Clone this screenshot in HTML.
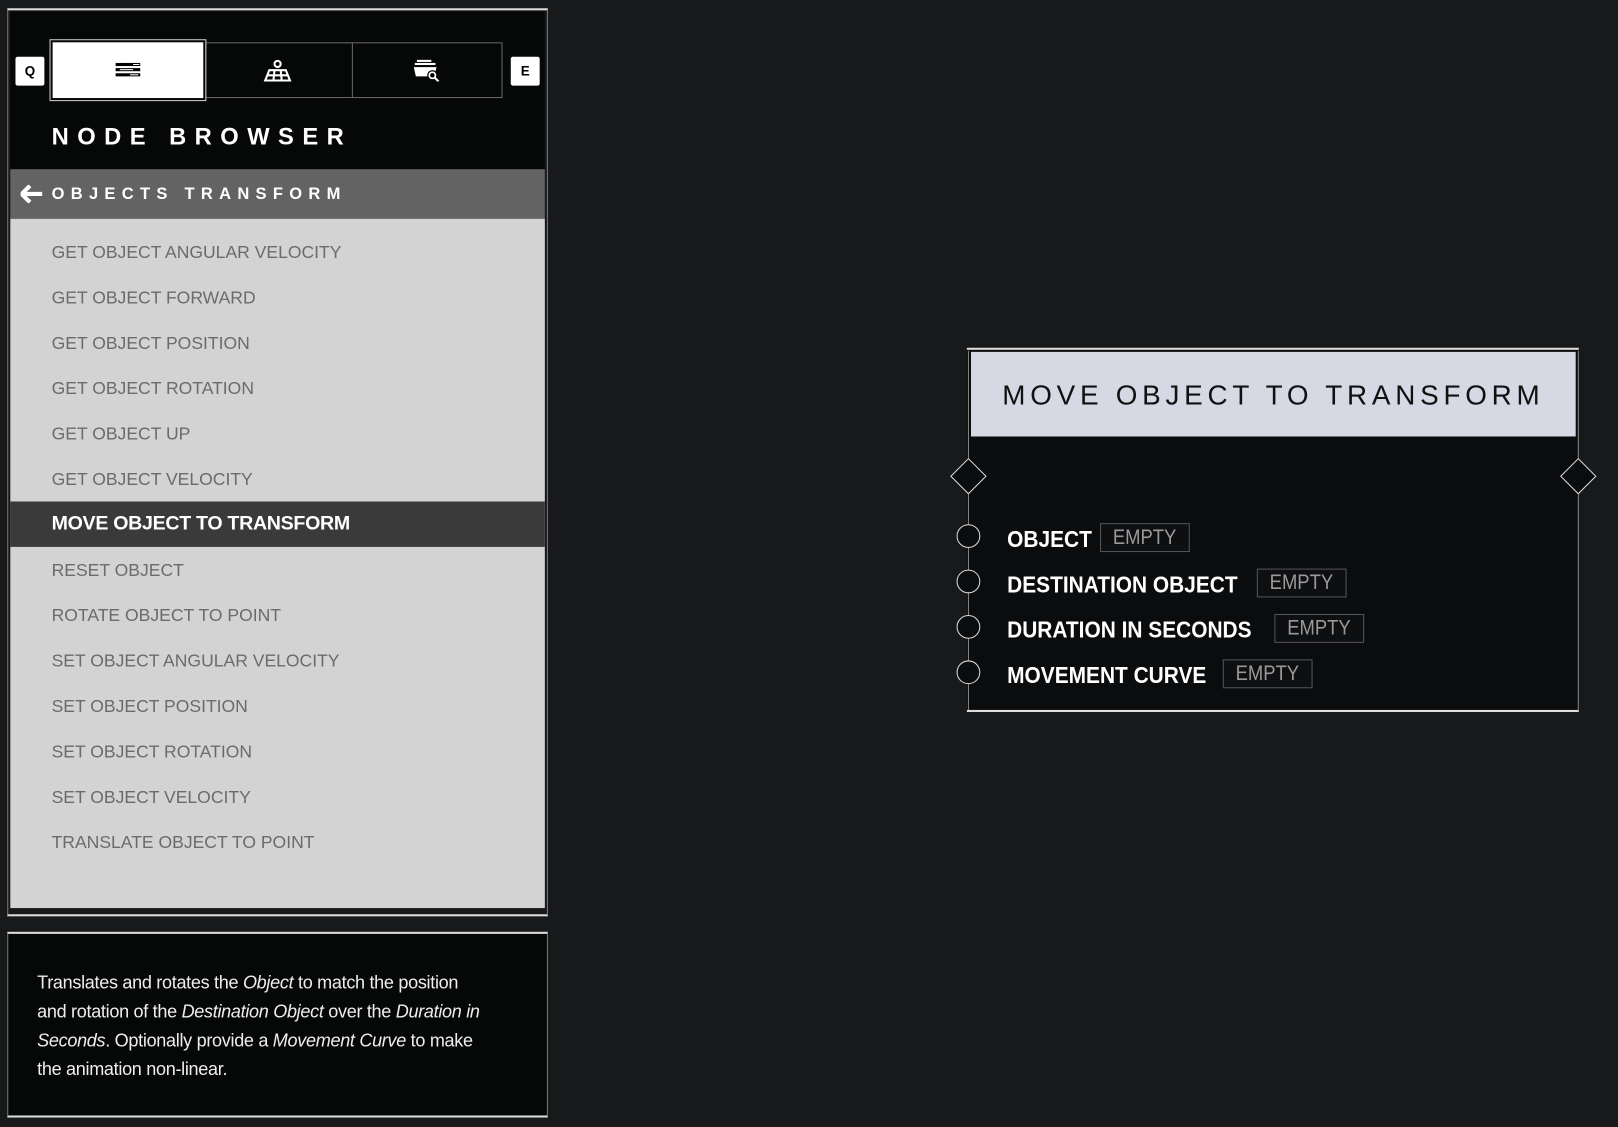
<!DOCTYPE html>
<html><head><meta charset="utf-8"><style>
*{margin:0;padding:0;box-sizing:border-box}
html,body{width:1618px;height:1127px;background:#18191b;overflow:hidden;font-family:"Liberation Sans",sans-serif}
#w{position:absolute;left:0;top:0;width:1568px;height:1092px;transform:scale(1.03189);transform-origin:0 0}
.a{position:absolute}
.item{position:absolute;left:50px;font-size:17px;color:#6b6b6b;line-height:20px}
.lbl{position:absolute;left:976px;color:#fff;font-weight:bold;font-size:22px;transform:scaleX(0.92);transform-origin:0 50%;white-space:nowrap;line-height:28px}
.emp{position:absolute;height:28px;border:1px solid #555;color:#9a9a9a;font-size:21px;line-height:26px;text-align:center;background:#0e0f11}
.emp span{display:inline-block;transform:scaleX(0.85)}
.circ{position:absolute;width:23px;height:23px;border:1.5px solid #ddd;border-radius:50%;background:#0b0c0e}
.dia{position:absolute;width:25px;height:25px;border:1.5px solid #ddd;background:#0b0c0e;transform:rotate(45deg)}
i{font-style:italic}
</style></head><body><div id="w">
<div class="a" style="left:7px;top:8px;width:524px;height:880px;border:1px solid #777;border-top:2px solid #ddd;border-bottom:2px solid #ddd"></div>
<div class="a" style="left:10px;top:11px;width:518px;height:153px;background:#060707"></div>
<div class="a" style="left:15px;top:55px;width:28px;height:28px;background:#fff;border-radius:2px;color:#000;font-weight:bold;font-size:13px;text-align:center;line-height:28px">Q</div>
<div class="a" style="left:495px;top:55px;width:28px;height:28px;background:#fff;border-radius:2px;color:#000;font-weight:bold;font-size:13px;text-align:center;line-height:28px">E</div>
<div class="a" style="left:199px;top:41px;width:288px;height:54px;border:1px solid #666"></div>
<div class="a" style="left:341px;top:41px;width:1px;height:54px;background:#666"></div>
<div class="a" style="left:48px;top:38px;width:152px;height:60px;border:1px solid #ccc"></div>
<div class="a" style="left:51px;top:41px;width:146px;height:54px;background:#fff"></div>
<svg class="a" style="left:112px;top:60px" width="24" height="16"><rect x="0" y="1" width="24" height="3" fill="#000"/><rect x="0" y="6" width="24" height="3" fill="#000"/><rect x="0" y="11" width="24" height="3" fill="#000"/><rect x="17" y="2" width="6" height="1" fill="#fff"/><rect x="4" y="7" width="13" height="1" fill="#fff"/><rect x="14" y="12" width="8" height="1" fill="#fff"/></svg>
<svg class="a" style="left:255px;top:56px" width="28" height="24" fill="none" stroke="#fff" stroke-width="2"><circle cx="14" cy="6" r="3"/><path d="M6 12h16l4 10H2z M4 17h20 M11 12l-1 10 M17 12l1 10"/></svg>
<svg class="a" style="left:400px;top:57px" width="28" height="22"><rect x="4" y="1" width="14" height="2" fill="#fff"/><rect x="2" y="4" width="20" height="2" fill="#fff"/><path d="M1 8h22l-2 9H3z" fill="#fff"/><circle cx="19" cy="16" r="5" fill="#000"/><circle cx="19" cy="16" r="3" fill="none" stroke="#fff" stroke-width="1.6"/><path d="M21 18l4 4" stroke="#fff" stroke-width="2"/></svg>
<div class="a" style="left:50px;top:119px;font-size:23px;font-weight:bold;color:#fff;letter-spacing:8.2px">NODE BROWSER</div>
<div class="a" style="left:10px;top:164px;width:518px;height:48px;background:#636363"></div>
<svg class="a" style="left:20px;top:179px" width="21" height="18"><path d="M9 1L1 9l8 8M1 9h20" stroke="#fff" stroke-width="4" fill="none"/></svg>
<div class="a" style="left:50px;top:180px;font-size:16px;font-weight:bold;color:#fff;letter-spacing:6.1px">OBJECTS TRANSFORM</div>
<div class="a" style="left:10px;top:212px;width:518px;height:668px;background:#d3d3d3"></div>
<div class="a" style="left:10px;top:486px;width:518px;height:44px;background:#3a3a3a"></div>
<div class="item" style="top:235px">GET OBJECT ANGULAR VELOCITY</div>
<div class="item" style="top:279px">GET OBJECT FORWARD</div>
<div class="item" style="top:323px">GET OBJECT POSITION</div>
<div class="item" style="top:367px">GET OBJECT ROTATION</div>
<div class="item" style="top:411px">GET OBJECT UP</div>
<div class="item" style="top:455px">GET OBJECT VELOCITY</div>
<div class="item" style="top:498px;color:#fff;font-weight:bold;font-size:19px;letter-spacing:-0.3px">MOVE OBJECT TO TRANSFORM</div>
<div class="item" style="top:543px">RESET OBJECT</div>
<div class="item" style="top:587px">ROTATE OBJECT TO POINT</div>
<div class="item" style="top:631px">SET OBJECT ANGULAR VELOCITY</div>
<div class="item" style="top:675px">SET OBJECT POSITION</div>
<div class="item" style="top:719px">SET OBJECT ROTATION</div>
<div class="item" style="top:763px">SET OBJECT VELOCITY</div>
<div class="item" style="top:807px">TRANSLATE OBJECT TO POINT</div>
<div class="a" style="left:7px;top:903px;width:524px;height:180px;background:#060707;border:1px solid #777;border-top:2px solid #ddd;border-bottom:2px solid #ddd"></div>
<div class="a" style="left:36px;top:938px;width:480px;font-size:17.5px;line-height:28px;color:#eee;letter-spacing:-0.3px">Translates and rotates the <i>Object</i> to match the position<br>and rotation of the <i>Destination Object</i> over the <i>Duration in</i><br><i>Seconds</i>. Optionally provide a <i>Movement Curve</i> to make<br>the animation non-linear.</div>
<div class="a" style="left:937px;top:337px;width:593px;height:353px;background:#0b0c0e;border-top:2px solid #ddd;border-bottom:2px solid #ddd"></div>
<div class="a" style="left:938px;top:340px;width:1px;height:348px;background:#888"></div>
<div class="a" style="left:1529px;top:340px;width:1px;height:348px;background:#888"></div>
<div class="a" style="left:941px;top:341px;width:586px;height:82px;background:#d6d8e3"></div>
<div class="a" style="left:941px;top:366px;width:586px;text-align:center;font-size:27px;color:#111;letter-spacing:4.6px;line-height:34px">MOVE OBJECT TO TRANSFORM</div>
<div class="dia" style="left:926px;top:449px"></div>
<div class="dia" style="left:1517px;top:449px"></div>
<div class="circ" style="left:927px;top:508px"></div>
<div class="circ" style="left:927px;top:552px"></div>
<div class="circ" style="left:927px;top:596px"></div>
<div class="circ" style="left:927px;top:640px"></div>
<div class="lbl" style="top:509px">OBJECT</div>
<div class="lbl" style="top:553px">DESTINATION OBJECT</div>
<div class="lbl" style="top:597px">DURATION IN SECONDS</div>
<div class="lbl" style="top:641px">MOVEMENT CURVE</div>
<div class="emp" style="left:1066px;top:507px;width:87px"><span>EMPTY</span></div>
<div class="emp" style="left:1218px;top:551px;width:87px"><span>EMPTY</span></div>
<div class="emp" style="left:1235px;top:595px;width:87px"><span>EMPTY</span></div>
<div class="emp" style="left:1185px;top:639px;width:87px"><span>EMPTY</span></div>
</div></body></html>
